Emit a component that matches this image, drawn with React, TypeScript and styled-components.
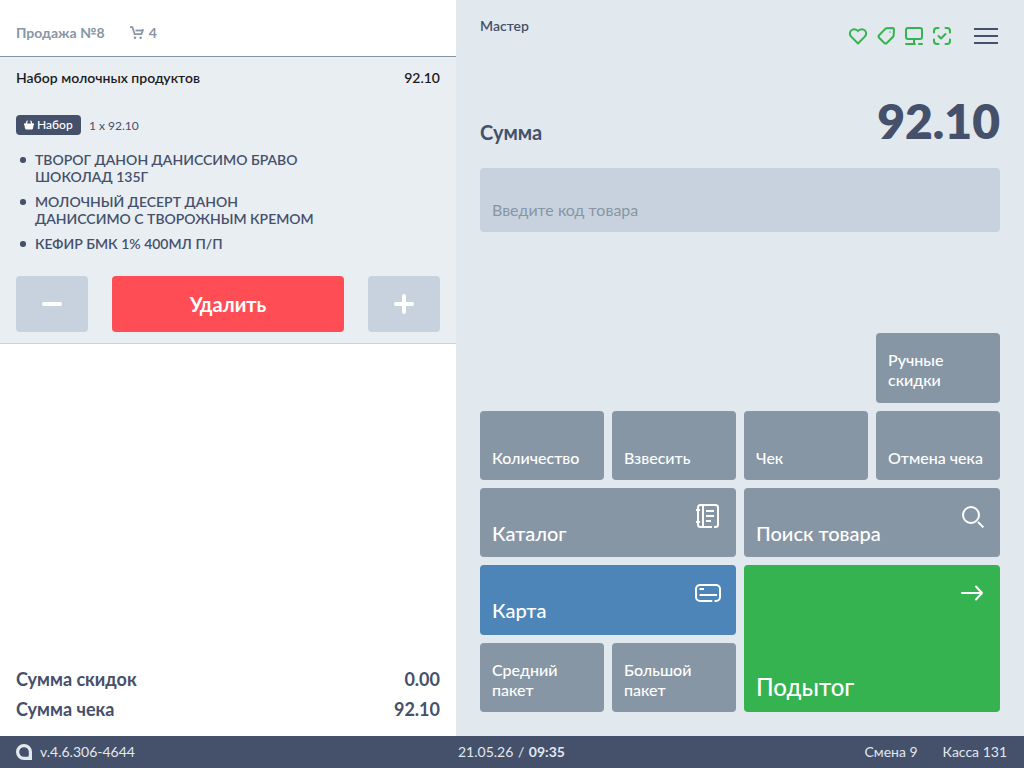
import React from 'react';
import styled, { createGlobalStyle } from 'styled-components';

const GlobalStyle = createGlobalStyle`
  * { box-sizing: border-box; }
  body { margin: 0; font-family: Lato, "Liberation Sans", sans-serif; color: #45506b; }
  button, input { font-family: inherit; border: 0; }
  svg { display: block; fill: none; }
`;

const Screen = styled.div`
  width: 1024px;
  height: 768px;
  display: grid;
  grid-template: 736px 32px / 456px 568px;
  overflow: hidden;
`;

const Receipt = styled.section`
  display: flex;
  flex-direction: column;
  background: #fff;
`;

const ReceiptHeader = styled.header`
  height: 57px;
  padding: 9px 16px 0;
  display: flex;
  align-items: center;
  border-bottom: 1px solid #8796a5;
  color: #8796a5;
  font-size: 14px;
  line-height: 17px;
  font-weight: 700;
`;

const CartCount = styled.span`
  display: flex;
  align-items: center;
  gap: 5px;
  margin-left: 25px;
`;

const Item = styled.article`
  height: 287px;
  padding: 12px 16px 0;
  background: #e9eef2;
  border-bottom: 1px solid #c7d2de;
`;

const ItemTitle = styled.div`
  display: flex;
  justify-content: space-between;
  font-size: 14px;
  line-height: 17px;
  font-weight: 600;
  color: #1b1b1f;
`;

const ItemMeta = styled.div`
  display: flex;
  align-items: center;
  gap: 8px;
  margin-top: 29px;
  font-size: 12px;
  line-height: 14px;
`;

const Quantity = styled.span`
  padding-top: 2px;
`;

const Tag = styled.span`
  width: 65px;
  height: 20px;
  padding: 0 0 1px 8px;
  display: flex;
  align-items: center;
  gap: 3px;
  border-radius: 4px;
  background: #45506b;
  color: #fff;
  font-weight: 500;
`;

const Contents = styled.ul`
  list-style: none;
  margin: 16px 0 0;
  padding: 0;
  width: 310px;
  display: flex;
  flex-direction: column;
  gap: 8px;
`;

const Content = styled.li`
  display: flex;
  padding-left: 4.2px;
  font-size: 14px;
  line-height: 17px;
  font-weight: 600;
  &::before {
    content: '';
    flex: none;
    width: 5.5px;
    height: 5.5px;
    margin: 6.2px 9.3px 0 0;
    border-radius: 50%;
    background: #45506b;
  }
`;

const ItemActions = styled.div`
  display: grid;
  grid-template-columns: 72px 232px 72px;
  gap: 24px;
  margin-top: 24px;
`;

const ActionButton = styled.button<{ $danger?: boolean }>`
  height: 56px;
  padding: 0;
  display: flex;
  align-items: center;
  justify-content: center;
  border-radius: 4px;
  background: ${p => (p.$danger ? '#ff4d55' : '#c7d2de')};
  color: #fff;
  font-size: 20px;
  font-weight: 700;
`;

const Totals = styled.div`
  margin-top: auto;
  padding: 0 16px 12px;
`;

const TotalRow = styled.div`
  display: flex;
  justify-content: space-between;
  font-size: 18px;
  line-height: 30px;
  font-weight: 700;
`;

const Panel = styled.main`
  padding: 0 24px;
  background: #e1e8ee;
`;

const PanelHeader = styled.header`
  height: 72px;
  display: flex;
  justify-content: space-between;
`;

const Role = styled.div`
  margin-top: 17px;
  font-size: 14px;
  line-height: 17px;
  font-weight: 600;
`;

const Statuses = styled.div`
  display: flex;
  align-items: center;
  gap: 4px;
  padding-right: 2px;
`;

const MenuButton = styled.button`
  width: 24px;
  height: 24px;
  margin-left: 16px;
  padding: 0;
  background: none;
`;

const SumRow = styled.div`
  height: 96px;
  display: flex;
  justify-content: space-between;
`;

const SumLabel = styled.div`
  margin-top: 48px;
  font-size: 20px;
  line-height: 24px;
  font-weight: 700;
`;

const SumValue = styled.div`
  margin-top: 19px;
  font-size: 48px;
  line-height: 60px;
  font-weight: 800;
`;

const CodeInput = styled.input`
  display: block;
  width: 520px;
  height: 64px;
  padding: 20px 12px 2px;
  border-radius: 4px;
  background: #c7d2de;
  font-size: 16px;
  &::placeholder { color: #8796a5; opacity: 1; }
`;

const Keys = styled.div`
  height: 456px;
  margin-top: 24px;
  display: grid;
  grid-template-columns: repeat(4, 1fr);
  grid-template-rows: repeat(6, minmax(0, 1fr));
  gap: 8px;
`;

const tones = { grey: '#8796a5', blue: '#4e85b8', green: '#35b350' };
const textSizes = { s: '16px', m: '20px', l: '24px' };

const Key = styled.button<{
  $area: string;
  $tone?: keyof typeof tones;
  $size?: keyof typeof textSizes;
}>`
  grid-area: ${p => p.$area};
  padding: 15px 14px ${p => (p.$size === 'l' ? '12.7px' : '12.4px')} 12px;
  display: flex;
  flex-direction: column;
  justify-content: space-between;
  align-items: flex-start;
  border-radius: 4px;
  background: ${p => tones[p.$tone ?? 'grey']};
  color: #fff;
  font-size: ${p => textSizes[p.$size ?? 's']};
  line-height: ${p => (p.$size ? '24px' : '20px')};
  font-weight: 500;
  text-align: left;
`;

const KeyLabel = styled.span`
  margin-top: auto;
`;

const KeyIcon = styled.span`
  align-self: flex-end;
  height: 28px;
  margin-bottom: -28px;
`;

const Footer = styled.footer`
  grid-column: 1 / -1;
  display: grid;
  grid-template-columns: 458px 1fr auto;
  align-items: center;
  padding: 0 17px 0 0;
  background: #45506b;
  color: #e1e8ee;
  font-size: 14px;
  line-height: 18px;
`;

const DateTime = styled.span`
  word-spacing: 1px;
`;

const Version = styled.div`
  display: flex;
  align-items: center;
  gap: 8px;
  padding-left: 16px;
`;

const Shift = styled.div`
  display: flex;
  gap: 25px;
`;

const Cart = () => (
  <svg width="14" height="14" viewBox="0 0 14 14" stroke="#8796a5" strokeWidth="1.8">
    <path d="M0 1.2h2.4l2.3 7h6.7l1.7-5" strokeLinejoin="round" />
    <path d="M5.5 4.5h7.8" />
    <circle cx="5" cy="11.8" r="1.3" fill="#8796a5" stroke="none" />
    <circle cx="10.6" cy="11.8" r="1.3" fill="#8796a5" stroke="none" />
  </svg>
);

const Basket = () => (
  <svg width="10" height="10" viewBox="0 0 10 10">
    <path d="M0 3.5h10v1.4h-.4l-.6 3.3Q8.8 9.5 7.6 9.5H2.4Q1.2 9.5 1 8.2L.4 4.9H0z" fill="#fff" />
    <path d="M2 4.2 3.2 1M8 4.2 6.8 1" stroke="#fff" strokeWidth="1.2" strokeLinecap="round" />
  </svg>
);

const StatusIcon = ({ children }: { children: React.ReactNode }) => (
  <svg width="24" height="24" viewBox="0 0 24 24" stroke="#35b350" strokeWidth="2" strokeLinecap="round" strokeLinejoin="round">
    {children}
  </svg>
);

const KeySvg = ({ children }: { children: React.ReactNode }) => (
  <svg width="28" height="28" viewBox="0 0 28 28" stroke="#fff" strokeWidth="2" strokeLinejoin="round">
    {children}
  </svg>
);

const Logo = () => (
  <svg width="16" height="16" viewBox="0 0 16 16">
    <path
      fillRule="evenodd"
      fill="#e1e8ee"
      d="M8 0a8 8 0 0 1 8 8v8H8A8 8 0 0 1 8 0zM8 3.2A4.8 4.8 0 0 0 8 12.8H11.3Q12.8 12.8 12.8 11.3V8A4.8 4.8 0 0 0 8 3.2z"
    />
  </svg>
);

const contents = [
  'ТВОРОГ ДАНОН ДАНИССИМО БРАВО ШОКОЛАД 135Г',
  'МОЛОЧНЫЙ ДЕСЕРТ ДАНОН ДАНИССИМО С ТВОРОЖНЫМ КРЕМОМ',
  'КЕФИР БМК 1% 400МЛ П/П',
];

export default function App() {
  return (
    <>
      <GlobalStyle />
      <Screen>
        <Receipt>
          <ReceiptHeader>
            <span>Продажа №8</span>
            <CartCount><Cart />4</CartCount>
          </ReceiptHeader>
          <Item>
            <ItemTitle><span>Набор молочных продуктов</span><span>92.10</span></ItemTitle>
            <ItemMeta><Tag><Basket />Набор</Tag><Quantity>1 x 92.10</Quantity></ItemMeta>
            <Contents>
              {contents.map(c => <Content key={c}><span>{c}</span></Content>)}
            </Contents>
            <ItemActions>
              <ActionButton aria-label="Меньше">
                <svg width="20" height="20" stroke="#fff" strokeWidth="4" strokeLinecap="round"><path d="M2 10h16" /></svg>
              </ActionButton>
              <ActionButton $danger>Удалить</ActionButton>
              <ActionButton aria-label="Больше">
                <svg width="20" height="20" stroke="#fff" strokeWidth="4" strokeLinecap="round"><path d="M2 10h16M10 2v16" /></svg>
              </ActionButton>
            </ItemActions>
          </Item>
          <Totals>
            <TotalRow><span>Сумма скидок</span><span>0.00</span></TotalRow>
            <TotalRow><span>Сумма чека</span><span>92.10</span></TotalRow>
          </Totals>
        </Receipt>
        <Panel>
          <PanelHeader>
            <Role>Мастер</Role>
            <Statuses>
              <StatusIcon><path d="M12 19.5 5.2 12.6a4.3 4.3 0 0 1 0-6.2 4.3 4.3 0 0 1 6.1 0l.7.7.7-.7a4.3 4.3 0 0 1 6.1 0 4.3 4.3 0 0 1 0 6.2z" /></StatusIcon>
              <StatusIcon>
                <path d="M12.5 4.3 18 4q2 0 2 2l-.4 5.5q0 .7-.5 1.2l-6.3 6.3q-1.2 1.2-2.4 0l-5.3-5.3q-1.2-1.2 0-2.4L11.3 4.9q.5-.5 1.2-.6z" />
                <path d="M16 8h.01" strokeWidth="1.5" />
              </StatusIcon>
              <StatusIcon><rect x="4" y="4" width="16" height="11" rx="2" /><path d="M12 15v5M4 20h9M17 20h3" /></StatusIcon>
              <StatusIcon><path d="M8.5 4H7a3 3 0 0 0-3 3v1.5M15.5 4H17a3 3 0 0 1 3 3v1.5M8.5 20H7a3 3 0 0 1-3-3v-1.5M15.5 20H17a3 3 0 0 0 3-3v-1.5M8.5 12l2.5 2.5 4.5-4.5" /></StatusIcon>
              <MenuButton aria-label="Меню">
                <svg width="24" height="24" stroke="#45506b" strokeWidth="2"><path d="M0 5h24M0 12h24M0 19h24" /></svg>
              </MenuButton>
            </Statuses>
          </PanelHeader>
          <SumRow><SumLabel>Сумма</SumLabel><SumValue>92.10</SumValue></SumRow>
          <CodeInput placeholder="Введите код товара" />
          <Keys>
            <Key $area="2 / 4"><KeyLabel>Ручные<br />скидки</KeyLabel></Key>
            <Key $area="3 / 1"><KeyLabel>Количество</KeyLabel></Key>
            <Key $area="3 / 2"><KeyLabel>Взвесить</KeyLabel></Key>
            <Key $area="3 / 3"><KeyLabel>Чек</KeyLabel></Key>
            <Key $area="3 / 4"><KeyLabel>Отмена чека</KeyLabel></Key>
            <Key $area="4 / 1 / 5 / 3" $size="m">
              <KeyIcon><KeySvg><path d="M20 24h1.500a2.500 2.500 0 0 0 2.500-2.500v-17A2.500 2.500 0 0 0 21.500 2h-15A2.500 2.500 0 0 0 4 4.500v17A2.500 2.500 0 0 0 6.500 24H18M9 2v22M2 7h4M2 19h4M12 8h8M12 13h8M12 18h5" /></KeySvg></KeyIcon>
              <KeyLabel>Каталог</KeyLabel>
            </Key>
            <Key $area="4 / 3 / 5 / 5" $size="m">
              <KeyIcon><KeySvg><circle cx="13" cy="12" r="8" /><path d="m20 19 5.400 5.400" /></KeySvg></KeyIcon>
              <KeyLabel>Поиск товара</KeyLabel>
            </Key>
            <Key $area="5 / 1 / 6 / 3" $tone="blue" $size="m">
              <KeyIcon><KeySvg><path d="M20.500 21H22a4 4 0 0 0 4-4V9a4 4 0 0 0-4-4H6a4 4 0 0 0-4 4v8a4 4 0 0 0 4 4h12.300M5.500 9H10M5.500 15H23" /></KeySvg></KeyIcon>
              <KeyLabel>Карта</KeyLabel>
            </Key>
            <Key $area="5 / 3 / 7 / 5" $tone="green" $size="l">
              <KeyIcon><KeySvg><path d="M4 13h20M18 6.500 24 13l-6 6.500" strokeLinecap="round" /></KeySvg></KeyIcon>
              <KeyLabel>Подытог</KeyLabel>
            </Key>
            <Key $area="6 / 1"><KeyLabel>Средний<br />пакет</KeyLabel></Key>
            <Key $area="6 / 2"><KeyLabel>Большой<br />пакет</KeyLabel></Key>
          </Keys>
        </Panel>
        <Footer>
          <Version><Logo /><span>v.4.6.306-4644</span></Version>
          <DateTime>21.05.26 / <b>09:35</b></DateTime>
          <Shift><span>Смена 9</span><span>Касса 131</span></Shift>
        </Footer>
      </Screen>
    </>
  );
}
